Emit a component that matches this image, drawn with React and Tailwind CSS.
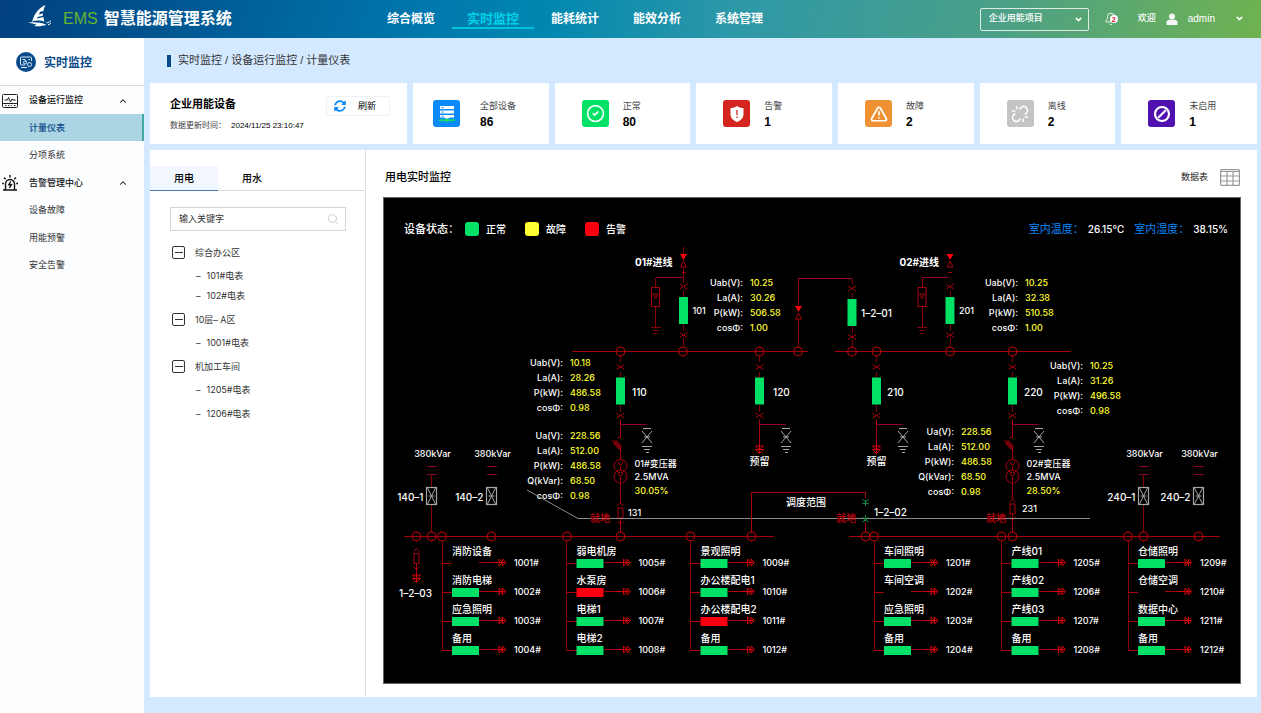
import React, { useState } from 'react';
import { Bell, ChevronDown, ChevronUp, CircleCheck, Search, TriangleAlert, Unlink } from 'lucide-react';
import { FaSyncAlt } from 'react-icons/fa';

const RED = '#a8000c';
const DARK_RED = '#86000a';
const PURPLE = '#8e0034';
const GREEN = '#00e165';
const GREY = '#a6a6a6';

const topMenu = ['综合概览', '实时监控', '能耗统计', '能效分析', '系统管理'];

const sideMenu = [
  { label: '设备运行监控', icon: 'monitor' },
  { label: '计量仪表', active: true },
  { label: '分项系统' },
  { label: '告警管理中心', icon: 'alarm' },
  { label: '设备故障' },
  { label: '用能预警' },
  { label: '安全告警' },
];

const tree = [
  { label: '综合办公区', children: ['101#电表', '102#电表'], gap: 'gap-0' },
  { label: '10层– A区', children: ['1001#电表'], gap: 'gap-0' },
  { label: '机加工车间', children: ['1205#电表', '1206#电表'], gap: 'gap-1' },
];

const legend = [
  { label: '正常', color: 'bg-[#00e165]' },
  { label: '故障', color: 'bg-[#ffff33]' },
  { label: '告警', color: 'bg-[#fa0010]' },
];

/* ---------- small icons ---------- */

function Logo() {
  return (
    <svg viewBox="0 0 24 22" className="w-6 h-[22px]" fill="#fff">
      <path d="M17.500 0C11.500 2.500 6.500 8 4 16.800c1.500-1 3-1.600 4.500-1.900L9.500 12l5.200-1.200.4-2.300-4.300.9 1.400-2.600 3.300-.8C15.900 3.500 16.500 1.500 17.500 0Z" />
      <path d="M8 13.800l7.500-1.700c.1 1.600.4 3.200 1 4.700-2.800-1.200-5.600-1.600-9.300-.7Z" />
      <path d="M0 17.800c6-1 12-.4 18.500 2-4.500 1.400-8 1.900-12.500 1.200l2.500-1.200C6 18.700 3 18.100 0 17.800Z" />
      <path d="M18.500 17.800c2-.2 3.300-.9 4.500-2.300M20 20c1.200-.3 2.200-1 2.900-1.900" stroke="#fff" strokeWidth="1" fill="none" />
    </svg>
  );
}

function ConsoleIcon() {
  return (
    <svg viewBox="0 0 20 20" className="size-5">
      <circle cx="10" cy="10" r="10" fill="#0b4a8a" />
      <g fill="none" stroke="#dbe9f7" strokeWidth="1">
        <path d="M9 13H5.500a1 1 0 0 1-1-1V6a1 1 0 0 1 1-1h9a1 1 0 0 1 1 1v3M5 15.500h6" />
        <path d="M6.500 7.500H9l1.500 2.500" />
        <circle cx="9" cy="10.500" r="1.500" />
        <circle cx="13.500" cy="12.500" r="2" />
        <path d="M12.500 7.500h1.500" />
      </g>
    </svg>
  );
}

function SideIcon({ name }) {
  if (name === 'monitor') {
    return (
      <svg viewBox="0 0 16 14" className="w-4 h-3.5" fill="none" stroke="#222" strokeWidth="1">
        <rect x="0.500" y="0.500" width="15" height="13" rx="1" />
        <path d="M0.500 9.500h15M2.500 6h3l1-2.500 2 4.500 1.500-3 .7 1h3M3 11.600h1.500M6 11.600h1.500M9 11.600h1M12 11.600h1.500" />
      </svg>
    );
  }
  return (
    <svg viewBox="0 0 16 16" className="size-4" fill="none" stroke="#111" strokeWidth="1.400">
      <path d="M1 15h14M3.500 15V9a4.500 4.500 0 0 1 9 0v6M8 0v2.500M2 2.500l1.700 1.700M14 2.500l-1.700 1.700M0 8.500h1.800M14.200 8.500H16" />
      <path d="M8.800 6.500 6.800 9.800h2.600l-2 3.200" />
    </svg>
  );
}

function ServerIcon() {
  return (
    <svg viewBox="0 0 18 18" className="size-[18px]">
      <g fill="#fff">
        <rect x="2" y="1" width="14" height="3" />
        <rect x="2" y="5.500" width="14" height="3" />
        <path d="M2 10h14v2.500h-4L9 14l-3-1.500H2Z" />
      </g>
      <path d="M3 2.500h3M3 7h3M3 11.200h3" stroke="#0c86f4" strokeWidth="0.700" />
      <path d="M1 15.200h16" stroke="#15dd68" strokeWidth="1.800" />
      <circle cx="9" cy="15.200" r="1.800" fill="#15dd68" />
    </svg>
  );
}

function ShieldIcon() {
  return (
    <svg viewBox="0 0 16 18" className="w-4 h-[18px]">
      <path d="M8 1c2 1.500 4.200 2 6.500 2v6c0 4-2.700 6.500-6.500 8-3.800-1.500-6.500-4-6.500-8V3C3.800 3 6 2.500 8 1Z" fill="#fff" />
      <path d="M8 5v5M8 11.500V13" stroke="#d4261e" strokeWidth="1.300" />
    </svg>
  );
}

function DisabledIcon() {
  return (
    <svg viewBox="0 0 18 18" className="size-[18px]" fill="none" stroke="#fff" strokeWidth="2.200">
      <circle cx="9" cy="9" r="7" />
      <path d="m5.200 12.800 7.600-7.600" />
    </svg>
  );
}

const stats = [
  { label: '全部设备', value: 86, color: 'bg-[#0c8bf8]', space: 'pl-5 gap-5', icon: <ServerIcon /> },
  { label: '正常', value: 80, color: 'bg-[#00e165]', space: 'pl-[27px] gap-3.5', icon: <CircleCheck size={19} color="#fff" /> },
  { label: '告警', value: 1, color: 'bg-[#d4261e]', space: 'pl-[27px] gap-3.5', icon: <ShieldIcon /> },
  { label: '故障', value: 2, color: 'bg-[#ef9234]', space: 'pl-[27px] gap-3.5', icon: <TriangleAlert size={18} strokeWidth={2.3} color="#fff" /> },
  { label: '离线', value: 2, color: 'bg-[#c4c4c4]', space: 'pl-[27px] gap-3.5', icon: <Unlink size={18} color="#fff" /> },
  { label: '未启用', value: 1, color: 'bg-[#5011b0]', space: 'pl-[27px] gap-3.5', icon: <DisabledIcon /> },
];

/* ---------- page parts ---------- */

function Header() {
  return (
    <header className="flex items-center h-[38px] text-white bg-[linear-gradient(100deg,#01407e_0%,#0076ad_33%,#0087b0_43%,#2d98a8_58%,#4ba087_79%,#70b250_100%)]">
      <div className="flex items-center w-[370px] pl-7 shrink-0">
        <span className="pb-1.5">
          <Logo />
        </span>
        <span className="ml-[11px] text-base text-[#68b42e]">EMS</span>
        <h1 className="ml-1.5 text-base font-bold whitespace-nowrap">智慧能源管理系统</h1>
      </div>
      <nav className="flex h-full">
        {topMenu.map((item) => (
          <a key={item} href="#" className="flex flex-col items-center w-[82px] pt-2">
            {item === '实时监控' ? (
              <span className="flex justify-center w-full h-[21px] text-[13px] leading-[22px] font-bold text-[#00d2ea] border-b-2 border-[#00c3dc]">{item}</span>
            ) : (
              <span className="text-xs leading-[22px] font-bold">{item}</span>
            )}
          </a>
        ))}
      </nav>
      <div className="flex items-center ml-auto pr-[17px] text-[9px] font-medium">
        <div className="relative">
          <select aria-label="项目" className="w-[109px] h-[23px] pl-2 border border-white/80 rounded-xs appearance-none bg-transparent">
            <option>企业用能项目</option>
          </select>
          <ChevronDown size={9} strokeWidth={4} className="absolute right-1.5 top-[7px] pointer-events-none" />
        </div>
        <button aria-label="消息" className="relative ml-[15px]">
          <Bell size={14} strokeWidth={1.5} />
          <span className="absolute left-1.5 top-[3px] flex items-center justify-center size-2 rounded-full bg-white text-[7px] leading-none font-bold text-[#e0102c]">2</span>
        </button>
        <span className="ml-5">欢迎</span>
        <svg viewBox="0 0 12 12" className="ml-2.5 size-3" fill="#f3f6f4">
          <circle cx="6" cy="3.500" r="3" />
          <path d="M0.500 12V9.500c0-2 1.500-2.800 3-2.800h5c1.500 0 3 .8 3 2.800V12Z" />
        </svg>
        <button className="flex items-center ml-2.5 pb-0.5 text-[10px]">
          admin
          <ChevronDown size={9} strokeWidth={4} className="ml-5" />
        </button>
      </div>
    </header>
  );
}

function Sidebar() {
  return (
    <aside className="w-36 shrink-0 bg-[#fbfdff]">
      <div className="flex items-center h-12 pl-4 gap-2 bg-white border-b border-[#dcdcdc]">
        <ConsoleIcon />
        <h2 className="pt-0.5 text-xs font-bold text-[#0b4a8a]">实时监控</h2>
      </div>
      <nav className="grid grid-rows-7 h-[193px] text-[9px] text-[#333]">
        {sideMenu.map((item) =>
          item.icon ? (
            <button key={item.label} className="flex items-center pl-0.5 pr-4 pt-0.5 font-medium text-[#111]">
              <SideIcon name={item.icon} />
              <span className="ml-[11px]">{item.label}</span>
              <ChevronUp size={10} strokeWidth={2.5} className="ml-auto" />
            </button>
          ) : (
            <a
              key={item.label}
              href="#"
              className={`flex items-center pl-[29px] pt-0.5 ${item.active ? 'bg-[#abd5e3] border-r-2 border-[#43a7a5] font-medium text-[#0b4a8a]' : ''}`}
            >
              {item.label}
            </a>
          )
        )}
      </nav>
    </aside>
  );
}

function StatCards() {
  return (
    <div className="grid grid-cols-[257px_repeat(6,minmax(0,1fr))] gap-1.5 h-[61px]">
      <div className="flex justify-between bg-white pl-5 pr-[17px] pt-[13px]">
        <div>
          <h3 className="text-[11px] leading-4 font-bold">企业用能设备</h3>
          <p className="flex items-center mt-2 text-[8px] leading-3 text-[#444]">
            数据更新时间：<time className="ml-[5px] text-black">2024/11/25 23:10:47</time>
          </p>
        </div>
        <button className="flex items-center w-16 h-5 pl-[7px] gap-3 border border-[#f0f1f3] rounded-xs text-[9px]">
          <FaSyncAlt size={12} color="#0c8bf8" />
          <span className="pt-0.5">刷新</span>
        </button>
      </div>
      {stats.map((s) => (
        <div key={s.label} className={`flex items-center bg-white ${s.space}`}>
          <div className={`flex items-center justify-center size-[27px] rounded-[3px] ${s.color}`}>{s.icon}</div>
          <div>
            <p className="text-[9px] leading-4 text-[#444]">{s.label}</p>
            <p className="text-xs leading-4 font-bold">{s.value}</p>
          </div>
        </div>
      ))}
    </div>
  );
}

function DevicePanel() {
  const [tab, setTab] = useState('用电');
  return (
    <div className="w-[216px] shrink-0 pt-4 border-r border-[#e0e0e0]">
      <div className="flex border-b border-[#dadada] text-[10px] font-medium">
        {['用电', '用水'].map((t) => (
          <button
            key={t}
            onClick={() => setTab(t)}
            className={`w-17 h-[25px] -mb-px border-b ${tab === t ? 'bg-[#f2f7ff] border-[#4a7bb5]' : 'border-[#dadada]'}`}
          >
            {t}
          </button>
        ))}
      </div>
      <div className="relative mx-5 mt-4 h-6">
        <input
          aria-label="输入关键字"
          placeholder="输入关键字"
          className="block w-44 h-6 pl-2 border border-[#d6d6d6] text-[9px] placeholder:text-[#333]"
        />
        <Search size={12} strokeWidth={1.5} color="#bbb" className="absolute left-[157px] top-1.5" />
      </div>
      <ul className="pl-[22px] pt-2 text-[9px] text-[#333] font-[Inter,'Noto_Sans_CJK_SC',sans-serif]">
        {tree.map((group) => (
          <li key={group.label}>
            <button className="flex items-center h-[27px] gap-2.5">
              <span className="flex items-center justify-center size-[13px] rounded-xs border border-[#333]">
                <span className="w-2 h-px bg-[#333]" />
              </span>
              {group.label}
            </button>
            <ul className={`flex flex-col ${group.gap}`}>
              {group.children.map((c) => (
                <li key={c} className="flex items-center h-5 pl-6 gap-1.5">
                  <span>–</span>
                  <a href="#">{c}</a>
                </li>
              ))}
            </ul>
          </li>
        ))}
      </ul>
    </div>
  );
}

/* ---------- single line diagram ---------- */

function Label({ children, ...rest }) {
  return (
    <text fill="#fff" dominantBaseline="central" {...rest}>
      {children}
    </text>
  );
}

function Line({ d, stroke = DARK_RED }) {
  return <path d={d} stroke={stroke} fill="none" shapeRendering="crispEdges" />;
}

function Cross({ x, y }) {
  return <path d={`M${x - 4} ${y - 2.5}l8 5m0 -5l-8 5`} stroke={RED} />;
}

function Node({ x, y }) {
  return <circle cx={x} cy={y} r="4.3" stroke={RED} strokeWidth="1.2" fill="none" />;
}

// switch with a cross above and below it, y is the top of the green block
function Breaker({ x, y, wires = true }) {
  return (
    <g>
      <Cross x={x} y={y - 10.5} />
      {wires && <Line d={`M${x} ${y - 6}v6M${x} ${y + 27}v7M${x} ${y + 41}v8`} />}
      <rect x={x - 4.5} y={y} width="9" height="27" rx="0.5" fill={GREEN} />
      <Cross x={x} y={y + 38} />
    </g>
  );
}

function Hourglass({ x, y }) {
  return (
    <g>
      <path d={`M${x - 3.5} ${y}h7l-3.500 6z`} fill="#ff0010" />
      <path d={`M${x} ${y + 7}l3 6h-6z`} stroke={RED} fill="none" />
    </g>
  );
}

function Ground({ x, y, stroke = DARK_RED }) {
  return <Line d={`M${x - 5} ${y}h10M${x - 3} ${y + 3}h6M${x - 1.5} ${y + 6}h3`} stroke={stroke} />;
}

function Arrester({ x }) {
  return (
    <g>
      <Line d={`M${x + 27} 277.500H${x}`} stroke={PURPLE} />
      <Line d={`M${x} 277.500V287M${x} 307V327`} />
      <rect x={x - 4} y="287.500" width="8" height="19" stroke={RED} fill="none" />
      <path d={`M${x - 2.5} 294h5l-2.500 5z`} stroke={RED} fill="none" />
      <Ground x={x} y={327.5} />
    </g>
  );
}

function Incoming({ x, no, label, wires }) {
  return (
    <g>
      <Label x={x - 11} y={262} textAnchor="end" fontWeight="700">{label}</Label>
      {wires && <Line d={`M${x} 247v7M${x} 267v16`} />}
      <Hourglass x={x} y={254} />
      <Line d={`M${x - 2} 272.500h4`} stroke={RED} />
      <Arrester x={x - 28} />
      <Breaker x={x} y={297} wires={wires} />
      <Label x={x + 9} y={310} fontSize="9">{no}</Label>
    </g>
  );
}

function EarthSwitch({ x }) {
  return (
    <g>
      <Line d={`M${x - 4} 428.500h8`} stroke={GREY} />
      <path d={`M${x - 5} 431l10 12m0 -12l-10 12M${x - 3} 437h6`} stroke={GREY} />
      <Ground x={x} y={446.5} stroke={GREY} />
    </g>
  );
}

function DownArrow({ x, y }) {
  return (
    <path d={`M${x - 4} ${y}h8l-4 4zM${x - 4} ${y + 3.5}h8l-4 4zM${x} ${y - 2}v9`} stroke="#d4000e" fill="none" />
  );
}

function Feeder({ x, no, noX }) {
  return (
    <g>
      <Line d={`M${x} 356v6`} />
      <Breaker x={x} y={377.5} />
      <Label x={noX} y={392}>{no}</Label>
      <Line d={`M${x} 424.500h26`} stroke={PURPLE} />
      <EarthSwitch x={x + 26.5} />
    </g>
  );
}

function Reserved({ x }) {
  return (
    <g>
      <Line d={`M${x} 421v25`} stroke={RED} />
      <DownArrow x={x} y={446} />
      <Label x={x} y={461} textAnchor="middle">预留</Label>
    </g>
  );
}

function Fuse({ x, y }) {
  return (
    <g stroke={RED} fill="none">
      <path d={`M${x - 3} ${y - 2}l3 -3l3 3`} />
      <rect x={x - 2.5} y={y} width="5" height="10" />
      <path d={`M${x - 3} ${y + 13}l3 3l3 -3M${x} ${y + 10}v6`} />
    </g>
  );
}

function Transformer({ x, name, load, no, noX, fuseY }) {
  return (
    <g>
      <Line d={`M${x} 421v16M${x} 449v10M${x} 483V${fuseY - 4}M${x} ${fuseY + 13}V532`} stroke={RED} />
      <g stroke={RED} fill="none">
        <path d={`M${x - 3} 437.500h3`} />
        <path d={`M${x - 8} 440l9 10`} />
        <path d={`M${x - 7} 443l2.500 -2.500l5.500 6l-2.500 2.500z`} fill="#6d0008" />
        <circle cx={x} cy="466" r="6.500" />
        <circle cx={x} cy="476.500" r="6.500" />
        <path d={`M${x - 3} 462l3 3.500l3 -3.500M${x} 465.500v5M${x - 3} 473l3 3.500l3 -3.500M${x} 476.500v5`} />
      </g>
      <Fuse x={x} y={fuseY} />
      <Label x={noX} y={fuseY + 4} fontSize="9">{no}</Label>
      <g fontSize="9">
        <Label x={x + 14} y={463}>{name}</Label>
        <Label x={x + 14} y={476}>2.5MVA</Label>
        <Label x={x + 14} y={490} fill="#ffff33">{load}</Label>
      </g>
    </g>
  );
}

function Capacitor({ x, no, wired }) {
  return (
    <g>
      <Label x={x + 1} y={453} fontSize="9" textAnchor="middle">380kVar</Label>
      <Line d={`M${x - 5} 466.500h10M${x - 5} 474.500h10`} stroke={PURPLE} />
      {wired && <Line d={`M${x} 475v12M${x} 505v27`} />}
      <rect x={x - 5} y="487.500" width="10" height="17" stroke={GREY} fill="none" strokeWidth="1.200" />
      <path d={`M${x - 4} 488l8 16m0 -16l-8 16M${x - 3} 496h6`} stroke={GREY} />
      <Label x={x - 8} y={497} textAnchor="end">{no}</Label>
    </g>
  );
}

function Readout({ x, y, rows }) {
  return rows.map(([name, value], i) => (
    <g key={name} fontSize="9">
      <Label x={x - 7} y={y + i * 15} textAnchor="end">{name}:</Label>
      <Label x={x} y={y + i * 15} fill="#ffff33">{value}</Label>
    </g>
  ));
}

const circuits = [
  { x: 442, loads: [['消防设备', '1001#', null], ['消防电梯', '1002#', GREEN], ['应急照明', '1003#', GREEN], ['备用', '1004#', GREEN]] },
  { x: 566.5, loads: [['弱电机房', '1005#', GREEN], ['水泵房', '1006#', '#fa0010'], ['电梯1', '1007#', GREEN], ['电梯2', '1008#', GREEN]] },
  { x: 690.5, loads: [['景观照明', '1009#', GREEN], ['办公楼配电1', '1010#', GREEN], ['办公楼配电2', '1011#', '#fa0010'], ['备用', '1012#', GREEN]] },
  { x: 874, loads: [['车间照明', '1201#', GREEN], ['车间空调', '1202#', null], ['应急照明', '1203#', GREEN], ['备用', '1204#', GREEN]] },
  { x: 1001.5, loads: [['产线01', '1205#', GREEN], ['产线02', '1206#', GREEN], ['产线03', '1207#', GREEN], ['备用', '1208#', GREEN]] },
  { x: 1128, loads: [['仓储照明', '1209#', GREEN], ['仓储空调', '1210#', null], ['数据中心', '1211#', GREEN], ['备用', '1212#', GREEN]] },
];

function Circuit({ x, loads }) {
  return (
    <g>
      <Line d={`M${x} 541V650.500`} />
      {loads.map(([name, no, color], i) => {
        const y = 563 + i * 29;
        return (
          <g key={no}>
            <Line d={`M${x} ${y + 0.5}h10M${x + 37} ${y - 0.5}h20`} stroke={RED} />
            {color && <rect x={x + 10} y={y - 4} width="27" height="9" rx="0.5" fill={color} />}
            <path
              d={`M${x + 50} ${y - 0.5}h13M${x + 57} ${y - 4}l3.500 3.500l-3.500 3.500zM${x + 60.5} ${y - 4}l3.500 3.500l-3.500 3.500z`}
              stroke="#d4000e"
              fill="none"
            />
            <Label x={x + 10} y={y - 12}>{name}</Label>
            <Label x={x + 72} y={y - 1} fontSize="9">{no}</Label>
          </g>
        );
      })}
    </g>
  );
}

function Diagram() {
  return (
    <svg
      viewBox="384 242 856 441"
      className="block w-full h-auto font-[Inter,'Noto_Sans_CJK_SC',sans-serif] font-medium"
      fontSize="10"
    >
      {/* high voltage side */}
      <Incoming x={683.5} no="101" label="01#进线" wires />
      <Incoming x={950} no="201" label="02#进线" />
      <Line d="M798 278.500H852" stroke="#a30040" />
      <Line d="M798.500 279V306M798.500 319V347M852 279v5" />
      <Hourglass x={798.5} y={306} />
      <Breaker x={852} y={299} />
      <Label x={861} y={313}>1–2–01</Label>
      <Line d="M572 351.500H808M835 351.500H1071" stroke={RED} />
      {[620.5, 683, 759.5, 798, 852, 876.5, 950, 1012.5].map((x) => (
        <Node key={x} x={x} y={351.5} />
      ))}

      <Feeder x={620.5} no="110" noX={632} />
      <Feeder x={759.5} no="120" noX={773} />
      <Feeder x={876.5} no="210" noX={887} />
      <Feeder x={1012.5} no="220" noX={1024} />
      <Reserved x={759.5} />
      <Reserved x={876.5} />
      <Transformer x={620.5} name="01#变压器" load="30.05%" no="131" noX={628} fuseY={508} />
      <Transformer x={1012.5} name="02#变压器" load="28.50%" no="231" noX={1022} fuseY={504} />

      <Readout x={750} y={282} rows={[['Uab(V)', '10.25'], ['La(A)', '30.26'], ['P(kW)', '506.58'], ['cosΦ', '1.00']]} />
      <Readout x={1025} y={282} rows={[['Uab(V)', '10.25'], ['La(A)', '32.38'], ['P(kW)', '510.58'], ['cosΦ', '1.00']]} />
      <Readout x={570} y={362} rows={[['Uab(V)', '10.18'], ['La(A)', '28.26'], ['P(kW)', '486.58'], ['cosΦ', '0.98']]} />
      <Readout x={1090} y={365} rows={[['Uab(V)', '10.25'], ['La(A)', '31.26'], ['P(kW)', '496.58'], ['cosΦ', '0.98']]} />
      <Readout x={570} y={435} rows={[['Ua(V)', '228.56'], ['La(A)', '512.00'], ['P(kW)', '486.58'], ['Q(kVar)', '68.50'], ['cosΦ', '0.98']]} />
      <Readout x={961} y={431} rows={[['Ua(V)', '228.56'], ['La(A)', '512.00'], ['P(kW)', '486.58'], ['Q(kVar)', '68.50'], ['cosΦ', '0.98']]} />

      {/* dispatch boundary */}
      <path d="M527 490L578 518.500H1090" stroke="#8c8c8c" fill="none" />
      <Line d="M751.500 532V492.500H865.500V498M865.500 523V532" stroke={RED} />
      <path d="M862.500 499l3 3l3 -3M865.500 500v6M862.500 503.500h6M865.500 515v6M862.500 517l3 3l3 -3M862.500 522l3 -2l3 2" stroke="#0b8f45" fill="none" />
      <Label x={786} y={502}>调度范围</Label>
      <Label x={874} y={512}>1–2–02</Label>
      {[590, 836, 986].map((x) => (
        <Label key={x} x={x} y={518} fill="#c8000e">就地</Label>
      ))}

      {/* low voltage side */}
      <Capacitor x={431.5} no="140–1" wired />
      <Capacitor x={491.5} no="140–2" />
      <Capacitor x={1143.5} no="240–1" wired />
      <Capacitor x={1198.5} no="240–2" />
      <Line d="M404 536.500H774M849 536.500H1220" stroke={RED} />
      {[416.5, 431.5, 442, 491.5, 567, 620.5, 690.5, 751.5, 865.5, 874, 1001.5, 1012.5, 1128, 1143.5, 1198.5].map((x) => (
        <Node key={x} x={x} y={536.5} />
      ))}
      <Fuse x={416.5} y={553.5} />
      <Line d="M416.500 568v8" stroke={RED} />
      <DownArrow x={416.5} y={575} />
      <Label x={399} y={593}>1–2–03</Label>
      {circuits.map((c) => (
        <Circuit key={c.x} {...c} />
      ))}
    </svg>
  );
}

function MonitorPanel() {
  return (
    <section className="flex-1 min-w-0 pl-[17px] pr-4 pb-[13px]">
      <div className="flex items-center justify-between h-[47px] pt-2 pl-0.5 pr-px">
        <h3 className="text-[11px] font-medium">用电实时监控</h3>
        <button className="flex items-center gap-3 text-[9px] text-[#222]">
          数据表
          <svg viewBox="0 0 20 17" className="w-5 h-[17px]" fill="none" stroke="#999" strokeWidth="1.200">
            <rect x="0.600" y="0.600" width="18.800" height="15.800" rx="1" />
            <path d="M0.600 2.500h18.800M0.600 7h18.800M0.600 12h18.800M7 3v13M13 3v13" />
          </svg>
        </button>
      </div>
      <div className="border border-[#666] bg-black text-white font-[Inter,'Noto_Sans_CJK_SC',sans-serif] font-medium">
        <div className="flex items-center justify-between h-11 pt-[18px] pl-5 pr-3">
          <div className="flex items-center text-[10px]">
            <span className="w-[61px] text-[11px]">设备状态：</span>
            {legend.map((l) => (
              <span key={l.label} className="flex items-center w-[60px] gap-[7px]">
                <span className={`size-3.5 rounded-[3px] ${l.color}`} />
                {l.label}
              </span>
            ))}
          </div>
          <div className="flex items-center text-[11px]">
            <span className="text-[#0c86f4] font-normal">室内温度：</span>
            <span className="ml-1 text-[10px]">26.15℃</span>
            <span className="ml-2.5 text-[#0c86f4] font-normal">室内湿度：</span>
            <span className="ml-1 text-[10px]">38.15%</span>
          </div>
        </div>
        <Diagram />
      </div>
    </section>
  );
}

function App() {
  return (
    <div className="flex flex-col min-h-screen bg-[#d3e9ff] text-black font-['Liberation_Sans','Noto_Sans_CJK_SC',sans-serif]">
      <Header />
      <div className="flex flex-1">
        <Sidebar />
        <main className="flex-1 min-w-0 pl-1.5 pr-1 pb-4">
          <div className="flex items-center h-[45px] pl-[17px] gap-[7px]">
            <span className="w-1 h-3 bg-[#0b4a8a]" />
            <p className="text-[11px] text-[#333]">实时监控 / 设备运行监控 / 计量仪表</p>
          </div>
          <StatCards />
          <div className="flex mt-1.5 bg-white">
            <DevicePanel />
            <MonitorPanel />
          </div>
        </main>
      </div>
    </div>
  );
}

export default App;
